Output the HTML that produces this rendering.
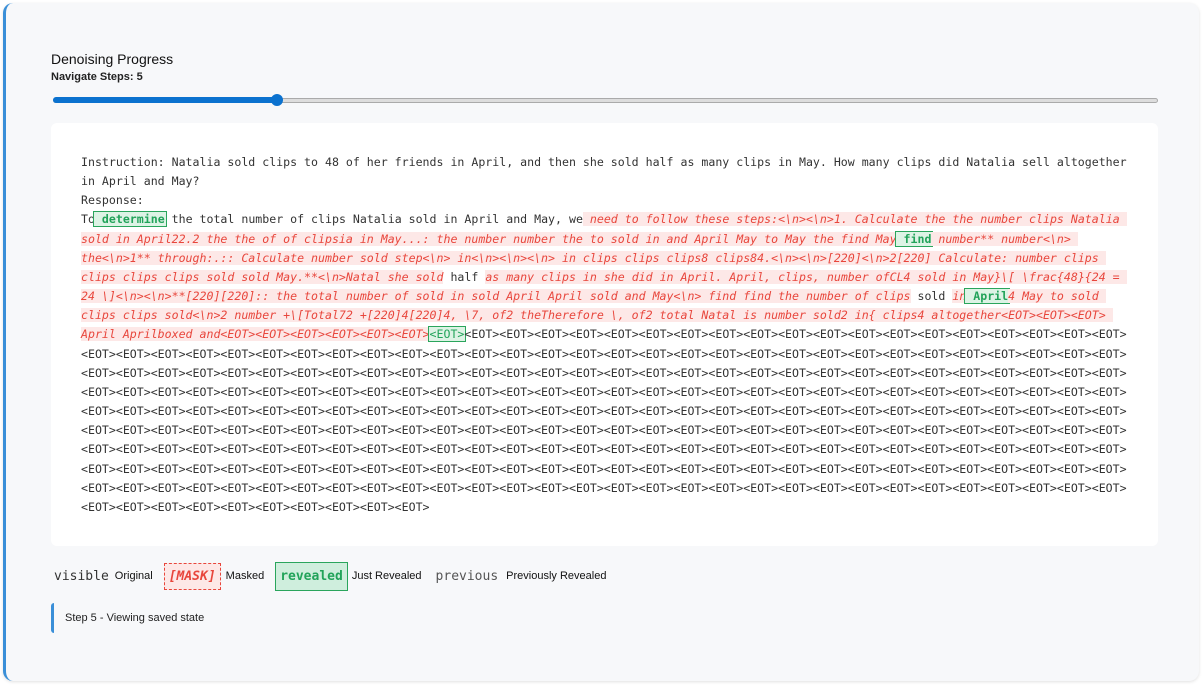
<!DOCTYPE html>
<html><head><meta charset="utf-8"><style>
body{margin:0;background:#fff;width:1204px;height:697px;overflow:hidden;font-family:"Liberation Sans",sans-serif;}
.panel{position:absolute;left:3px;top:3px;width:1196px;height:678px;background:#f7f8fa;border-left:3px solid #3a8fd8;border-radius:10px;box-shadow:0 1px 3px rgba(0,0,0,.12);box-sizing:border-box}
.h{position:absolute;left:51px;top:51px;font-size:14px;color:#111}
.n{position:absolute;left:51px;top:71px;font-size:11px;font-weight:bold;color:#222}
.track{position:absolute;left:53px;top:98px;width:1103px;height:3px;background:#ddd;border:1px solid #aaa;border-radius:3px;box-sizing:content-box}
.fill{position:absolute;left:53px;top:97px;width:224px;height:6px;background:#0b72cf;border-radius:3px}
.thumb{position:absolute;left:271px;top:94px;width:12px;height:12px;border-radius:50%;background:#0b72cf}
.card{position:absolute;left:51px;top:123px;width:1107px;height:423px;background:#fff;border-radius:6px}
.txt{position:absolute;left:81px;top:153px;font-family:"DejaVu Sans Mono","Liberation Mono",monospace;font-size:11.58px;line-height:19.15px;color:#333;white-space:pre}
.r{color:#e8463c;font-style:italic;background:#fde8e7}
.g{color:#22a35a;font-weight:bold;background:#ddf3e5;border:1px solid #2aa55c;padding:0 1px;margin:0 -2px}
.leg{position:absolute;top:562px;left:54px;height:28px;display:flex;align-items:center;font-size:11px;color:#111}
.mono{font-family:"DejaVu Sans Mono","Liberation Mono",monospace;font-size:13px}
.step{position:absolute;left:51px;top:603px;height:30px;border-left:3px solid #3a8fd8;border-radius:3px;padding-left:11px;line-height:30px;font-size:11px;color:#222}
</style></head><body>
<div class="panel"></div>
<div class="h">Denoising Progress</div>
<div class="n">Navigate Steps: 5</div>
<div class="track"></div><div class="fill"></div><div class="thumb"></div>
<div class="card"></div>
<div class="txt">Instruction: Natalia sold clips to 48 of her friends in April, and then she sold half as many clips in May. How many clips did Natalia sell altogether
in April and May?
Response:
To<span class="g"> determine</span> the total number of clips Natalia sold in April and May, we<span class="r"> need to follow these steps:&lt;\n&gt;&lt;\n&gt;1. Calculate the the number clips Natalia </span>
<span class="r">sold in April22.2 the the of of clipsia in May...: the number number the to sold in and April May to May the find May</span><span class="g"> find</span><span class="r"> number** number&lt;\n&gt; </span>
<span class="r">the&lt;\n&gt;1** through:.:: Calculate number sold step&lt;\n&gt; in&lt;\n&gt;&lt;\n&gt;&lt;\n&gt; in clips clips clips8 clips84.&lt;\n&gt;&lt;\n&gt;[220]&lt;\n&gt;2[220] Calculate: number clips </span>
<span class="r">clips clips clips sold sold May.**&lt;\n&gt;Natal she sold</span> half <span class="r">as many clips in she did in April. April, clips, number ofCL4 sold in May}\[ \frac{48}{24 = </span>
<span class="r">24 \]&lt;\n&gt;&lt;\n&gt;**[220][220]:: the total number of sold in sold April April sold and May&lt;\n&gt; find find the number of clips</span> sold <span class="r">in</span><span class="g"> April</span><span class="r">4 May to sold </span>
<span class="r">clips clips sold&lt;\n&gt;2 number +\[Total72 +[220]4[220]4, \7, of2 theTherefore \, of2 total Natal is number sold2 in{ clips4 altogether&lt;EOT&gt;&lt;EOT&gt;&lt;EOT&gt; </span>
<span class="r">April Aprilboxed and&lt;EOT&gt;&lt;EOT&gt;&lt;EOT&gt;&lt;EOT&gt;&lt;EOT&gt;&lt;EOT&gt;</span><span class="g" style="font-weight:normal">&lt;EOT&gt;</span>&lt;EOT&gt;&lt;EOT&gt;&lt;EOT&gt;&lt;EOT&gt;&lt;EOT&gt;&lt;EOT&gt;&lt;EOT&gt;&lt;EOT&gt;&lt;EOT&gt;&lt;EOT&gt;&lt;EOT&gt;&lt;EOT&gt;&lt;EOT&gt;&lt;EOT&gt;&lt;EOT&gt;&lt;EOT&gt;&lt;EOT&gt;&lt;EOT&gt;&lt;EOT&gt;
&lt;EOT&gt;&lt;EOT&gt;&lt;EOT&gt;&lt;EOT&gt;&lt;EOT&gt;&lt;EOT&gt;&lt;EOT&gt;&lt;EOT&gt;&lt;EOT&gt;&lt;EOT&gt;&lt;EOT&gt;&lt;EOT&gt;&lt;EOT&gt;&lt;EOT&gt;&lt;EOT&gt;&lt;EOT&gt;&lt;EOT&gt;&lt;EOT&gt;&lt;EOT&gt;&lt;EOT&gt;&lt;EOT&gt;&lt;EOT&gt;&lt;EOT&gt;&lt;EOT&gt;&lt;EOT&gt;&lt;EOT&gt;&lt;EOT&gt;&lt;EOT&gt;&lt;EOT&gt;&lt;EOT&gt;
&lt;EOT&gt;&lt;EOT&gt;&lt;EOT&gt;&lt;EOT&gt;&lt;EOT&gt;&lt;EOT&gt;&lt;EOT&gt;&lt;EOT&gt;&lt;EOT&gt;&lt;EOT&gt;&lt;EOT&gt;&lt;EOT&gt;&lt;EOT&gt;&lt;EOT&gt;&lt;EOT&gt;&lt;EOT&gt;&lt;EOT&gt;&lt;EOT&gt;&lt;EOT&gt;&lt;EOT&gt;&lt;EOT&gt;&lt;EOT&gt;&lt;EOT&gt;&lt;EOT&gt;&lt;EOT&gt;&lt;EOT&gt;&lt;EOT&gt;&lt;EOT&gt;&lt;EOT&gt;&lt;EOT&gt;
&lt;EOT&gt;&lt;EOT&gt;&lt;EOT&gt;&lt;EOT&gt;&lt;EOT&gt;&lt;EOT&gt;&lt;EOT&gt;&lt;EOT&gt;&lt;EOT&gt;&lt;EOT&gt;&lt;EOT&gt;&lt;EOT&gt;&lt;EOT&gt;&lt;EOT&gt;&lt;EOT&gt;&lt;EOT&gt;&lt;EOT&gt;&lt;EOT&gt;&lt;EOT&gt;&lt;EOT&gt;&lt;EOT&gt;&lt;EOT&gt;&lt;EOT&gt;&lt;EOT&gt;&lt;EOT&gt;&lt;EOT&gt;&lt;EOT&gt;&lt;EOT&gt;&lt;EOT&gt;&lt;EOT&gt;
&lt;EOT&gt;&lt;EOT&gt;&lt;EOT&gt;&lt;EOT&gt;&lt;EOT&gt;&lt;EOT&gt;&lt;EOT&gt;&lt;EOT&gt;&lt;EOT&gt;&lt;EOT&gt;&lt;EOT&gt;&lt;EOT&gt;&lt;EOT&gt;&lt;EOT&gt;&lt;EOT&gt;&lt;EOT&gt;&lt;EOT&gt;&lt;EOT&gt;&lt;EOT&gt;&lt;EOT&gt;&lt;EOT&gt;&lt;EOT&gt;&lt;EOT&gt;&lt;EOT&gt;&lt;EOT&gt;&lt;EOT&gt;&lt;EOT&gt;&lt;EOT&gt;&lt;EOT&gt;&lt;EOT&gt;
&lt;EOT&gt;&lt;EOT&gt;&lt;EOT&gt;&lt;EOT&gt;&lt;EOT&gt;&lt;EOT&gt;&lt;EOT&gt;&lt;EOT&gt;&lt;EOT&gt;&lt;EOT&gt;&lt;EOT&gt;&lt;EOT&gt;&lt;EOT&gt;&lt;EOT&gt;&lt;EOT&gt;&lt;EOT&gt;&lt;EOT&gt;&lt;EOT&gt;&lt;EOT&gt;&lt;EOT&gt;&lt;EOT&gt;&lt;EOT&gt;&lt;EOT&gt;&lt;EOT&gt;&lt;EOT&gt;&lt;EOT&gt;&lt;EOT&gt;&lt;EOT&gt;&lt;EOT&gt;&lt;EOT&gt;
&lt;EOT&gt;&lt;EOT&gt;&lt;EOT&gt;&lt;EOT&gt;&lt;EOT&gt;&lt;EOT&gt;&lt;EOT&gt;&lt;EOT&gt;&lt;EOT&gt;&lt;EOT&gt;&lt;EOT&gt;&lt;EOT&gt;&lt;EOT&gt;&lt;EOT&gt;&lt;EOT&gt;&lt;EOT&gt;&lt;EOT&gt;&lt;EOT&gt;&lt;EOT&gt;&lt;EOT&gt;&lt;EOT&gt;&lt;EOT&gt;&lt;EOT&gt;&lt;EOT&gt;&lt;EOT&gt;&lt;EOT&gt;&lt;EOT&gt;&lt;EOT&gt;&lt;EOT&gt;&lt;EOT&gt;
&lt;EOT&gt;&lt;EOT&gt;&lt;EOT&gt;&lt;EOT&gt;&lt;EOT&gt;&lt;EOT&gt;&lt;EOT&gt;&lt;EOT&gt;&lt;EOT&gt;&lt;EOT&gt;&lt;EOT&gt;&lt;EOT&gt;&lt;EOT&gt;&lt;EOT&gt;&lt;EOT&gt;&lt;EOT&gt;&lt;EOT&gt;&lt;EOT&gt;&lt;EOT&gt;&lt;EOT&gt;&lt;EOT&gt;&lt;EOT&gt;&lt;EOT&gt;&lt;EOT&gt;&lt;EOT&gt;&lt;EOT&gt;&lt;EOT&gt;&lt;EOT&gt;&lt;EOT&gt;&lt;EOT&gt;
&lt;EOT&gt;&lt;EOT&gt;&lt;EOT&gt;&lt;EOT&gt;&lt;EOT&gt;&lt;EOT&gt;&lt;EOT&gt;&lt;EOT&gt;&lt;EOT&gt;&lt;EOT&gt;&lt;EOT&gt;&lt;EOT&gt;&lt;EOT&gt;&lt;EOT&gt;&lt;EOT&gt;&lt;EOT&gt;&lt;EOT&gt;&lt;EOT&gt;&lt;EOT&gt;&lt;EOT&gt;&lt;EOT&gt;&lt;EOT&gt;&lt;EOT&gt;&lt;EOT&gt;&lt;EOT&gt;&lt;EOT&gt;&lt;EOT&gt;&lt;EOT&gt;&lt;EOT&gt;&lt;EOT&gt;
&lt;EOT&gt;&lt;EOT&gt;&lt;EOT&gt;&lt;EOT&gt;&lt;EOT&gt;&lt;EOT&gt;&lt;EOT&gt;&lt;EOT&gt;&lt;EOT&gt;&lt;EOT&gt;</div>
<div class="leg">
<span class="mono" style="color:#333">visible</span><span style="margin-left:6px">Original</span>
<span class="mono" style="margin-left:11px;color:#e8463c;font-style:italic;font-weight:bold;background:#fde8e7;border:1px dashed #e8463c;padding:5px 4px">[MASK]</span><span style="margin-left:5px">Masked</span>
<span class="mono" style="margin-left:11px;color:#22a35a;font-weight:bold;background:#cfeedd;border:1px solid #2aa55c;padding:6px 4px">revealed</span><span style="margin-left:4px">Just Revealed</span>
<span class="mono" style="margin-left:14px;color:#555">previous</span><span style="margin-left:8px">Previously Revealed</span>
</div>
<div class="step">Step 5 - Viewing saved state</div>
</body></html>
